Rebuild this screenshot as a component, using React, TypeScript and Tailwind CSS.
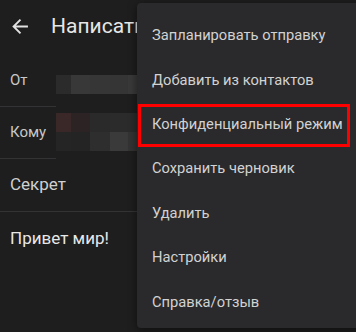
const menuItems = [
  'Запланировать отправку',
  'Добавить из контактов',
  'Конфиденциальный режим',
  'Сохранить черновик',
  'Удалить',
  'Настройки',
  'Справка/отзыв',
]

const blockWidths = ['w-[15px]', 'w-[19px]', 'w-[20px]', 'w-[18px]', 'w-[20px]']

function Blocks({ colors }: { colors: string[] }) {
  return (
    <div className="flex h-[19px]">
      {colors.map((c, i) => (
        <div key={i} className={`${blockWidths[i]} h-full ${c}`} />
      ))}
    </div>
  )
}

export default function App() {
  return (
    <div className="relative w-[356px] h-[332px] overflow-hidden bg-[#1e1e1e] font-['Roboto',sans-serif]">
      <div className="flex items-center h-[55px] pb-[3px]">
        <svg
          className="ml-[12px] w-[17px] h-[17px] text-[#e2e2e2]"
          viewBox="0 0 16 16"
          fill="none"
          stroke="currentColor"
          strokeWidth="1.8"
        >
          <path d="M15 8H1.5M8 1.5L1.5 8L8 14.5" />
        </svg>
        <span className="ml-[22px] text-[21px] text-[#e6e6e6] leading-none">
          Написать
        </span>
      </div>

      <div className="flex h-[52px]">
        <div className="w-[56px] border-b border-[#333335] flex items-center pl-[10px] pb-[1px] text-[15px] text-[#c8c8c8]">
          От
        </div>
        <div className="pt-[20px]">
          <Blocks
            colors={[
              'bg-[#2b2b2b]',
              'bg-[#383838]',
              'bg-[#363636]',
              'bg-[#353535]',
              'bg-[#393939]',
            ]}
          />
        </div>
      </div>

      <div className="flex h-[52px]">
        <div className="w-[56px] border-b border-[#333335] flex items-center pl-[10px] pb-[1px] text-[15px] text-[#c8c8c8]">
          Кому
        </div>
        <div className="pt-[6px]">
          <Blocks
            colors={[
              'bg-[#3a2727]',
              'bg-[#2c2424]',
              'bg-[#2a2a2a]',
              'bg-[#2b2b2b]',
              'bg-[#2b2b2b]',
            ]}
          />
          <Blocks
            colors={[
              'bg-[#252525]',
              'bg-[#242424]',
              'bg-[#2e2e2e]',
              'bg-[#3a3a3a]',
              'bg-[#333333]',
            ]}
          />
        </div>
      </div>

      <div className="h-[53px] border-b border-[#333335] flex items-center pl-[10px] text-[17px] text-[#d0d0d0]">
        Секрет
      </div>

      <div className="pl-[10px] pt-[14px] text-[17px] text-[#e8e8e8]">
        Привет мир!
      </div>

      <div className="absolute left-[137px] top-[3px] w-[230px] h-[325px] rounded-[4px] bg-[#2a2a2c] shadow-[0_2px_8px_rgba(0,0,0,0.5)] pt-[10px]">
        {menuItems.map((item) => (
          <div
            key={item}
            className="h-[44.4px] flex items-center pl-[15px] text-[14.7px] text-[#d2d2d2] whitespace-nowrap"
          >
            {item}
          </div>
        ))}
        <div className="absolute left-[1px] top-[101px] w-[212px] h-[43px] border-[3px] border-[#ff0000]" />
      </div>
    </div>
  )
}
